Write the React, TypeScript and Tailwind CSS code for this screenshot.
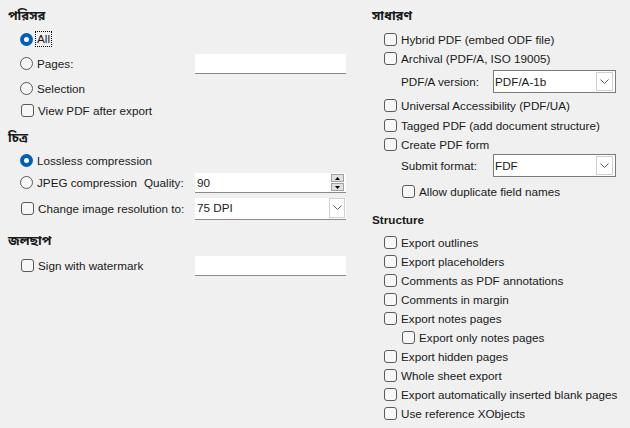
import React from 'react'

function Radio({ label, checked, focus }: { label: string; checked?: boolean; focus?: boolean }) {
  return (
    <div className="flex items-center gap-[4px]">
      {checked ? (
        <span className="w-[13px] h-[13px] rounded-full bg-[#005fb8] flex items-center justify-center shrink-0">
          <span className="w-[5px] h-[5px] rounded-full bg-white" />
        </span>
      ) : (
        <span className="w-[13px] h-[13px] rounded-full border border-[#5a5a5a] bg-[#f7f7f7] shrink-0" />
      )}
      <span className={focus ? 'border border-dotted border-black px-[1px] leading-[14px] -ml-[2px]' : 'whitespace-nowrap'}>{label}</span>
    </div>
  )
}

function Check({ label }: { label: string }) {
  return (
    <div className="flex items-center gap-[4px]">
      <span className="w-[13px] h-[13px] rounded-[3px] border border-[#5a5a5a] bg-[#f7f7f7] shrink-0" />
      <span className="whitespace-nowrap">{label}</span>
    </div>
  )
}

function Chevron() {
  return (
    <svg width="9" height="6" viewBox="0 0 9 6" fill="none">
      <path d="M0.5 0.5 L4.5 4.5 L8.5 0.5" stroke="#606060" strokeWidth="1" />
    </svg>
  )
}

function Field({ value, children }: { value?: string; children?: React.ReactNode }) {
  return (
    <div className="w-[151px] h-[20px] bg-white border-b border-[#8a8a8a] flex items-center pl-[2px] pr-[2px]">
      <span className="flex-1">{value}</span>
      {children}
    </div>
  )
}

function Select({ value }: { value: string }) {
  return (
    <div className="w-[123px] h-[23px] bg-white border border-[#7a7a7a] flex items-center pl-[1px] pr-[2px]">
      <span className="flex-1">{value}</span>
      <span className="w-[17px] h-[19px] border border-[#d0d0d0] flex items-center justify-center">
        <Chevron />
      </span>
    </div>
  )
}

function Heading({ children }: { children: React.ReactNode }) {
  return <div className="font-bold text-[13px]">{children}</div>
}

export default function App() {
  return (
    <div className="w-[630px] h-[428px] bg-[#f0f0f0] text-[11.7px] text-[#1a1a1a] [font-family:'Liberation_Sans','Noto_Sans_Bengali','Noto_Serif_Bengali','Lohit_Bengali',sans-serif] flex overflow-hidden">
      {/* left column */}
      <div className="w-[364px] pl-[8px] pt-[6px] flex flex-col">
        <div className="h-[20px] flex items-center"><Heading>পরিসর</Heading></div>
        <div className="h-[26px] flex items-center pl-[12px]"><Radio label="All" checked focus /></div>
        <div className="h-[23px] flex items-center pl-[12px]">
          <div className="w-[175px]"><Radio label="Pages:" /></div>
          <Field />
        </div>
        <div className="h-[27px] flex items-center pl-[12px]"><Radio label="Selection" /></div>
        <div className="h-[17px] flex items-center pl-[13px]"><Check label="View PDF after export" /></div>

        <div className="h-[32px] flex items-end pb-[4px]"><Heading>চিত্র</Heading></div>
        <div className="h-[20px] flex items-center pl-[12px]"><Radio label="Lossless compression" checked /></div>
        <div className="h-[24px] flex items-center pl-[12px]">
          <div className="w-[175px] flex">
            <Radio label="JPEG compression" />
            <span className="ml-[7px]">Quality:</span>
          </div>
          <Field value="90">
            <div className="flex flex-col gap-[1px]">
              <span className="w-[13px] h-[8px] bg-[#e1e1e1] border border-[#a0a0a0] flex items-center justify-center">
                <svg width="5" height="3" viewBox="0 0 5 3"><path d="M0 3 L2.5 0 L5 3 Z" fill="#000" /></svg>
              </span>
              <span className="w-[13px] h-[8px] bg-[#e1e1e1] border border-[#a0a0a0] flex items-center justify-center">
                <svg width="5" height="3" viewBox="0 0 5 3"><path d="M0 0 L2.5 3 L5 0 Z" fill="#000" /></svg>
              </span>
            </div>
          </Field>
        </div>
        <div className="h-[27px] flex items-center pl-[13px]">
          <div className="w-[174px]"><Check label="Change image resolution to:" /></div>
          <div className="w-[151px] h-[22px] bg-white border-b border-[#8a8a8a] flex items-center pl-[2px] pr-[1px]">
            <span className="flex-1">75 DPI</span>
            <span className="w-[16px] h-[20px] border border-[#d0d0d0] flex items-center justify-center">
              <Chevron />
            </span>
          </div>
        </div>

        <div className="h-[34px] flex items-end pb-[6px]"><Heading>জলছাপ</Heading></div>
        <div className="h-[20px] flex items-center pl-[13px]">
          <div className="w-[174px]"><Check label="Sign with watermark" /></div>
          <Field />
        </div>
      </div>

      {/* right column */}
      <div className="flex-1 pl-[8px] pt-[6px] flex flex-col">
        <div className="h-[20px] flex items-center"><Heading>সাধারণ</Heading></div>
        <div className="h-[4px]" />
        <div className="h-[19px] flex items-center pl-[12px]"><Check label="Hybrid PDF (embed ODF file)" /></div>
        <div className="h-[19px] flex items-center pl-[12px]"><Check label="Archival (PDF/A, ISO 19005)" /></div>
        <div className="h-[27px] flex items-center pl-[29px]">
          <span className="w-[92px]">PDF/A version:</span>
          <Select value="PDF/A-1b" />
        </div>
        <div className="h-[21px] flex items-center pl-[12px]"><Check label="Universal Accessibility (PDF/UA)" /></div>
        <div className="h-[19px] flex items-center pl-[12px]"><Check label="Tagged PDF (add document structure)" /></div>
        <div className="h-[19px] flex items-center pl-[12px]"><Check label="Create PDF form" /></div>
        <div className="h-[23px] flex items-center pl-[29px]">
          <span className="w-[92px]">Submit format:</span>
          <Select value="FDF" />
        </div>
        <div className="h-[30px] flex items-center pl-[30px]"><Check label="Allow duplicate field names" /></div>

        <div className="h-[26px] flex items-center"><span className="font-bold">Structure</span></div>
        {[
          ['Export outlines', 0],
          ['Export placeholders', 0],
          ['Comments as PDF annotations', 0],
          ['Comments in margin', 0],
          ['Export notes pages', 0],
          ['Export only notes pages', 1],
          ['Export hidden pages', 0],
          ['Whole sheet export', 0],
          ['Export automatically inserted blank pages', 0],
          ['Use reference XObjects', 0],
        ].map(([label, sub]) => (
          <div key={label as string} className={`h-[19px] flex items-center ${sub ? 'pl-[30px]' : 'pl-[12px]'}`}>
            <Check label={label as string} />
          </div>
        ))}
      </div>
    </div>
  )
}
